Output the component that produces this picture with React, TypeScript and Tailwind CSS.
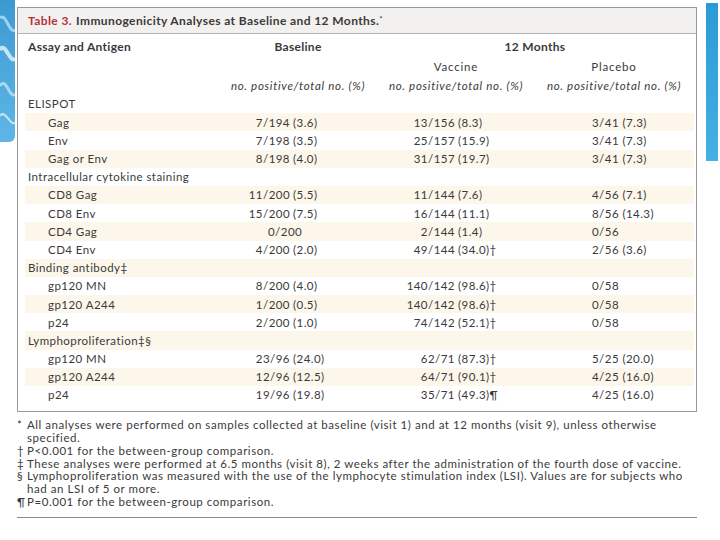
import React from "react";

type Row =
  | { kind: "group"; label: string }
  | { kind: "item"; label: string; base: [string, string?]; vac: [string, string?]; pla: string };

const rows: Row[] = [
  { kind: "group", label: "ELISPOT" },
  { kind: "item", label: "Gag", base: ["7/194", "(3.6)"], vac: ["13/156", "(8.3)"], pla: "3/41 (7.3)" },
  { kind: "item", label: "Env", base: ["7/198", "(3.5)"], vac: ["25/157", "(15.9)"], pla: "3/41 (7.3)" },
  { kind: "item", label: "Gag or Env", base: ["8/198", "(4.0)"], vac: ["31/157", "(19.7)"], pla: "3/41 (7.3)" },
  { kind: "group", label: "Intracellular cytokine staining" },
  { kind: "item", label: "CD8 Gag", base: ["11/200", "(5.5)"], vac: ["11/144", "(7.6)"], pla: "4/56 (7.1)" },
  { kind: "item", label: "CD8 Env", base: ["15/200", "(7.5)"], vac: ["16/144", "(11.1)"], pla: "8/56 (14.3)" },
  { kind: "item", label: "CD4 Gag", base: ["0/200"], vac: ["2/144", "(1.4)"], pla: "0/56" },
  { kind: "item", label: "CD4 Env", base: ["4/200", "(2.0)"], vac: ["49/144", "(34.0)†"], pla: "2/56 (3.6)" },
  { kind: "group", label: "Binding antibody‡" },
  { kind: "item", label: "gp120 MN", base: ["8/200", "(4.0)"], vac: ["140/142", "(98.6)†"], pla: "0/58" },
  { kind: "item", label: "gp120 A244", base: ["1/200", "(0.5)"], vac: ["140/142", "(98.6)†"], pla: "0/58" },
  { kind: "item", label: "p24", base: ["2/200", "(1.0)"], vac: ["74/142", "(52.1)†"], pla: "0/58" },
  { kind: "group", label: "Lymphoproliferation‡§" },
  { kind: "item", label: "gp120 MN", base: ["23/96", "(24.0)"], vac: ["62/71", "(87.3)†"], pla: "5/25 (20.0)" },
  { kind: "item", label: "gp120 A244", base: ["12/96", "(12.5)"], vac: ["64/71", "(90.1)†"], pla: "4/25 (16.0)" },
  { kind: "item", label: "p24", base: ["19/96", "(19.8)"], vac: ["35/71", "(49.3)¶"], pla: "4/25 (16.0)" },
];

const notes: [string, string][] = [
  ["*", "All analyses were performed on samples collected at baseline (visit 1) and at 12 months (visit 9), unless otherwise specified."],
  ["†", "P<0.001 for the between-group comparison."],
  ["‡", "These analyses were performed at 6.5 months (visit 8), 2 weeks after the administration of the fourth dose of vaccine."],
  ["§", "Lymphoproliferation was measured with the use of the lymphocyte stimulation index (LSI). Values are for subjects who had an LSI of 5 or more."],
  ["¶", "P=0.001 for the between-group comparison."],
];

const cols = "grid grid-cols-[183px_136px_136px_136px] gap-x-[22px]";

function Aligned({ value, width }: { value: [string, string?]; width: string }) {
  const [pre, post] = value;
  if (!post) {
    return <span className="pl-[38px]">{pre}</span>;
  }
  return (
    <span className="flex whitespace-nowrap">
      <span className={`${width} text-right`}>{pre}</span>
      <span className="ml-[3px]">{post}</span>
    </span>
  );
}

export default function App() {
  return (
    <div className="relative w-[720px] h-[540px] bg-white overflow-hidden font-['Lato','Liberation_Sans',sans-serif] text-[#3a3a3a]">
      {/* slide decorations */}
      <div className="absolute left-0 top-0 w-[15px] h-[142px] bg-gradient-to-b from-[#3c9ad3] to-[#5db6e6] rounded-br-[6px]">
        <svg className="absolute left-0 top-0" width="15" height="142" viewBox="0 0 15 142">
          <path d="M0 18 C6 12 9 34 15 30" stroke="#9fd3f0" strokeWidth="3" fill="none" />
          <path d="M0 50 C5 40 11 66 15 58" stroke="#c4e5f7" strokeWidth="4" fill="none" />
          <path d="M0 86 C6 76 10 100 15 94" stroke="#a9d8f2" strokeWidth="3" fill="none" />
          <path d="M0 116 C5 108 11 128 15 122" stroke="#c4e5f7" strokeWidth="2" fill="none" />
        </svg>
      </div>
      <div className="absolute left-[706px] top-[3px] w-[12px] h-[158px] bg-gradient-to-b from-[#2a9ad6] to-[#45b0e4]" />

      <div className="ml-[17px] mt-[7px] w-[680px] border border-[#9a9a9a]">
        <div className="h-[26px] bg-[#f3f1ef] border-b border-[#b5b5b5] pl-[10px] flex items-center text-[12px] tracking-[0.4px] font-bold">
          <span className="text-[#b2323c]">Table 3.</span>
          <span className="ml-[4px]">Immunogenicity Analyses at Baseline and 12 Months.</span>
          <span className="text-[8px] self-start mt-[5px] font-normal">*</span>
        </div>

        <div className="ml-[7px] mr-[2px] pt-[3px] pb-[7px]">
          <div className={`${cols} h-[20px] items-center text-[12px] tracking-[0.3px] font-bold`}>
            <span className="pl-[3px]">Assay and Antigen</span>
            <span className="text-center">Baseline</span>
            <span className="col-span-2 text-center">12 Months</span>
          </div>
          <div className={`${cols} h-[20px] items-center text-[11.5px] tracking-[0.8px]`}>
            <span />
            <span />
            <span className="text-center">Vaccine</span>
            <span className="text-center">Placebo</span>
          </div>
          <div className={`${cols} h-[18px] items-center text-[11.5px] tracking-[0.7px] italic whitespace-nowrap`}>
            <span />
            <span className="text-center">no. positive/total no. (%)</span>
            <span className="text-center">no. positive/total no. (%)</span>
            <span className="text-center">no. positive/total no. (%)</span>
          </div>

          {rows.map((r, i) => (
            <div
              key={i}
              className={`${cols} h-[18.2px] items-center text-[11.5px] tracking-[0.45px] ${i % 2 === 1 ? "bg-[#fcf7ea]" : ""}`}
            >
              {r.kind === "group" ? (
                <span className="pl-[3px] col-span-4">{r.label}</span>
              ) : (
                <>
                  <span className="pl-[23px]">{r.label}</span>
                  <Aligned value={r.base} width="w-[60px]" />
                  <Aligned value={r.vac} width="w-[67px]" />
                  <span className="pl-[46px] whitespace-nowrap">{r.pla}</span>
                </>
              )}
            </div>
          ))}
        </div>
      </div>

      <div className="ml-[17px] mt-[7px] w-[680px] text-[11.5px] leading-[12.8px] tracking-[0.55px]">
        {notes.map(([m, t]) => (
          <div key={m} className="flex">
            <span className="w-[10px] shrink-0">{m}</span>
            <span className="w-[668px]">{t}</span>
          </div>
        ))}
        <div className="mt-[8px] border-t border-[#8a8a8a]" />
      </div>
    </div>
  );
}
